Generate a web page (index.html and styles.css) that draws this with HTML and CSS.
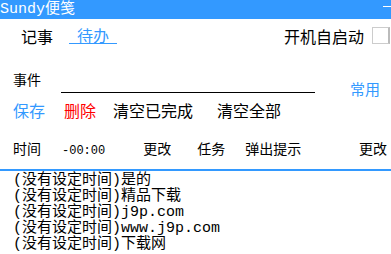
FILE: index.html
```html
<!DOCTYPE html>
<html lang="zh-CN">
<head>
  <meta charset="UTF-8">
  <meta name="viewport" content="width=device-width, initial-scale=1.0">
  <title>Sundy便笺</title>
  <link rel="stylesheet" href="styles.css">
</head>
<body>
  <div class="titlebar">
    <span class="title">Sundy便笺</span>
    <span class="minimize"></span>
  </div>

  <div class="tabs">
    <span class="tab">记事</span>
    <span class="tab active">待办</span>
    <label class="autostart">开机自启动<span class="check"></span></label>
  </div>

  <div class="event">
    <span class="event-label">事件</span>
    <span class="event-input"></span>
    <span class="common">常用</span>
  </div>

  <div class="actions">
    <span class="save">保存</span>
    <span class="delete">删除</span>
    <span class="clear-done">清空已完成</span>
    <span class="clear-all">清空全部</span>
  </div>

  <div class="timebar">
    <span>时间</span>
    <span class="time">-00:00</span>
    <span class="change">更改</span>
    <span class="task">任务</span>
    <span class="popup">弹出提示</span>
    <span class="change-right">更改</span>
  </div>

  <ul class="todo-list">
    <li>(没有设定时间)是的</li>
    <li>(没有设定时间)精品下载</li>
    <li>(没有设定时间)j9p.com</li>
    <li>(没有设定时间)www.j9p.com</li>
    <li>(没有设定时间)下载网</li>
  </ul>
</body>
</html>
```

FILE: styles.css
```css
body {
  margin: 0;
  background: #fff;
  color: #000;
  font-family: "Noto Sans CJK SC", sans-serif;
  font-size: 16px;
  line-height: 16px;
  overflow: hidden;
}
.titlebar {
  height: 19px;
  background: #3399ff;
  color: #fff;
  display: flex;
  align-items: center;
  font-family: "Liberation Mono", "Noto Sans CJK SC", monospace;
  font-size: 15px;
}
.minimize {
  margin-left: auto;
  margin-top: -6px;
  width: 8px;
  height: 1px;
  background: #fff;
}
.tabs {
  display: flex;
  align-items: flex-end;
  padding: 8px 0 0 21px;
}
.tab.active {
  margin-left: 16px;
  padding: 0 8px 0;
  color: #3399ff;
  border-bottom: 1px solid #3399ff;
}
.autostart {
  margin-left: auto;
  display: flex;
  align-items: center;
  gap: 8px;
}
.check {
  width: 15px;
  height: 15px;
  border: 1px solid #ccc;
  border-right: 2px solid #bbb;
  margin-right: 1px;
}
.event {
  display: flex;
  align-items: flex-start;
  padding: 0 11px 0 13px;
  margin-top: 27px;
}
.event-label {
  font-size: 14px;
}
.event-input {
  width: 254px;
  height: 21px;
  margin-left: 20px;
  border-bottom: 1px solid #000;
}
.common {
  margin-left: auto;
  margin-top: 10px;
  font-size: 15px;
  color: #3399ff;
}
.actions {
  display: flex;
  padding-left: 13px;
  margin-top: 5px;
}
.save {
  color: #3399ff;
}
.delete {
  color: #ff0000;
  margin-left: 19px;
}
.clear-done {
  margin-left: 17px;
}
.clear-all {
  margin-left: 24px;
}
.timebar {
  display: flex;
  align-items: baseline;
  font-size: 14px;
  line-height: 14px;
  padding: 0 4px 11px 13px;
  margin-top: 23px;
  border-bottom: 2px solid #3399ff;
}
.time {
  margin-left: 21px;
  font-family: "Liberation Mono", monospace;
  font-size: 12px;
}
.change {
  margin-left: 38px;
}
.task {
  margin-left: 26px;
}
.popup {
  margin-left: 20px;
}
.change-right {
  margin-left: auto;
}
.todo-list {
  list-style: none;
  margin: 2px 0 0;
  padding: 0 0 0 13px;
  font-family: "Liberation Mono", "Noto Sans CJK SC", monospace;
  font-size: 15px;
  line-height: 16px;
}
```
